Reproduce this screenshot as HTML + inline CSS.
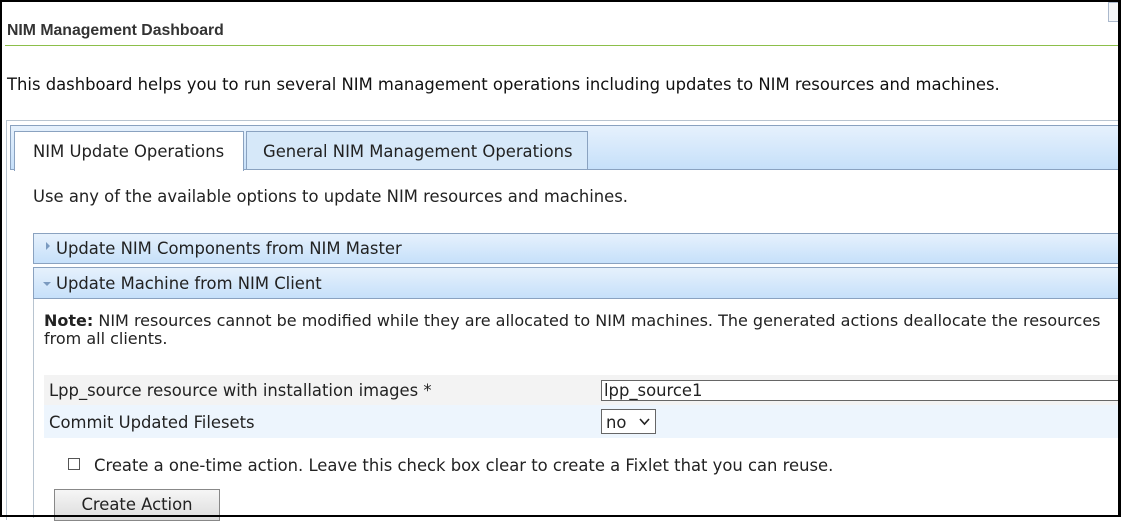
<!DOCTYPE html>
<html><head><style>
*{box-sizing:border-box;margin:0;padding:0}
body{width:1121px;height:517px;overflow:hidden;background:#fff;position:relative;font-family:"DejaVu Sans",Verdana,sans-serif;color:#222;font-size:16.4px}
.a{position:absolute}
.grad{background:linear-gradient(#e6f1fc,#c6e0fa)}
</style></head><body>
<div class="a" style="left:0;top:0;width:1121px;height:517px;border:solid #000;border-width:2px 3px 2px 2px;z-index:10;pointer-events:none"></div>
<div class="a" style="left:1108px;top:2px;width:12px;height:20px;border:1px solid #aab8cc;background:#f4f6f8"></div>
<div class="a" style="left:7px;top:22px;font-family:'Liberation Sans',sans-serif;font-weight:bold;font-size:15.8px;color:#333">NIM Management Dashboard</div>
<div class="a" style="left:5px;top:45px;width:1116px;height:1px;background:#8cbf4a"></div>
<div class="a" style="left:7px;top:75px;font-size:16.4px;color:#111;white-space:nowrap">This dashboard helps you to run several NIM management operations including updates to NIM resources and machines.</div>
<div class="a" style="left:6px;top:120px;width:1115px;height:400px;border-top:1px solid #b8c4d0;border-left:1px solid #b8c4d0"></div>
<div class="a grad" style="left:10px;top:125px;width:1111px;height:45px;border:1px solid #8aa2c0;border-right:none"></div>
<div class="a" style="left:14px;top:131px;width:230px;height:40px;background:#fff;border:1px solid #8aa2c0;border-bottom:none;font-size:16.4px;padding:10px 0 0 18px;white-space:nowrap">NIM Update Operations</div>
<div class="a" style="left:246px;top:131px;width:342px;height:39px;background:#d6e8f9;border:1px solid #8aa2c0;font-size:16.4px;padding:10px 0 0 16px;white-space:nowrap;color:#222">General NIM Management Operations</div>
<div class="a" style="left:33px;top:187px;font-size:16.4px;white-space:nowrap">Use any of the available options to update NIM resources and machines.</div>
<div class="a" style="left:33px;top:298px;width:1px;height:220px;background:#b8c4d0"></div>
<div class="a grad" style="left:33px;top:233px;width:1088px;height:31px;border:1px solid #8aa2c0;border-right:none;font-size:16.4px;padding:5px 0 0 22px;white-space:nowrap">Update NIM Components from NIM Master</div>
<div class="a" style="left:46px;top:242px;width:0;height:0;border-left:4px solid #7a9ac0;border-top:4px solid transparent;border-bottom:4px solid transparent"></div>
<div class="a grad" style="left:33px;top:267px;width:1088px;height:32px;border:1px solid #8aa2c0;border-right:none;font-size:16.4px;padding:6px 0 0 22px;white-space:nowrap">Update Machine from NIM Client</div>
<div class="a" style="left:43px;top:282px;width:0;height:0;border-top:4px solid #7a9ac0;border-left:4px solid transparent;border-right:4px solid transparent"></div>
<div class="a" style="left:44px;top:312px;font-size:16px;line-height:18px;white-space:nowrap"><b>Note:</b> NIM resources cannot be modified while they are allocated to NIM machines. The generated actions deallocate the resources<br>from all clients.</div>
<div class="a" style="left:44px;top:375px;width:1077px;height:30px;background:#f3f3f3"></div>
<div class="a" style="left:49px;top:381px;font-size:16.4px;white-space:nowrap">Lpp_source resource with installation images *</div>
<div class="a" style="left:601px;top:380px;width:520px;height:21px;border:1px solid #666;border-right:none;background:#fff;font-size:16.4px;padding:0 0 0 2px;line-height:19px">lpp_source1</div>
<div class="a" style="left:44px;top:405px;width:1077px;height:33px;background:#edf5fd"></div>
<div class="a" style="left:49px;top:413px;font-size:16.4px;white-space:nowrap">Commit Updated Filesets</div>
<div class="a" style="left:601px;top:409px;width:55px;height:25px;border:1px solid #666;background:#fff;font-size:16.4px;padding:3px 0 0 4px">no
<svg class="a" style="left:37px;top:8px" width="11" height="8"><path d="M1 1 L5.5 6 L10 1" fill="none" stroke="#222" stroke-width="1.6"/></svg></div>
<div class="a" style="left:68px;top:458px;width:12px;height:12px;border:1px solid #555;background:#fff"></div>
<div class="a" style="left:94px;top:456px;font-size:16.4px;white-space:nowrap">Create a one-time action. Leave this check box clear to create a Fixlet that you can reuse.</div>
<div class="a" style="left:54px;top:489px;width:166px;height:32px;border:1px solid #888;background:linear-gradient(#f6f6f6,#dcdcdc);font-size:16.4px;text-align:center;padding-top:5px">Create Action</div>
</body></html>
